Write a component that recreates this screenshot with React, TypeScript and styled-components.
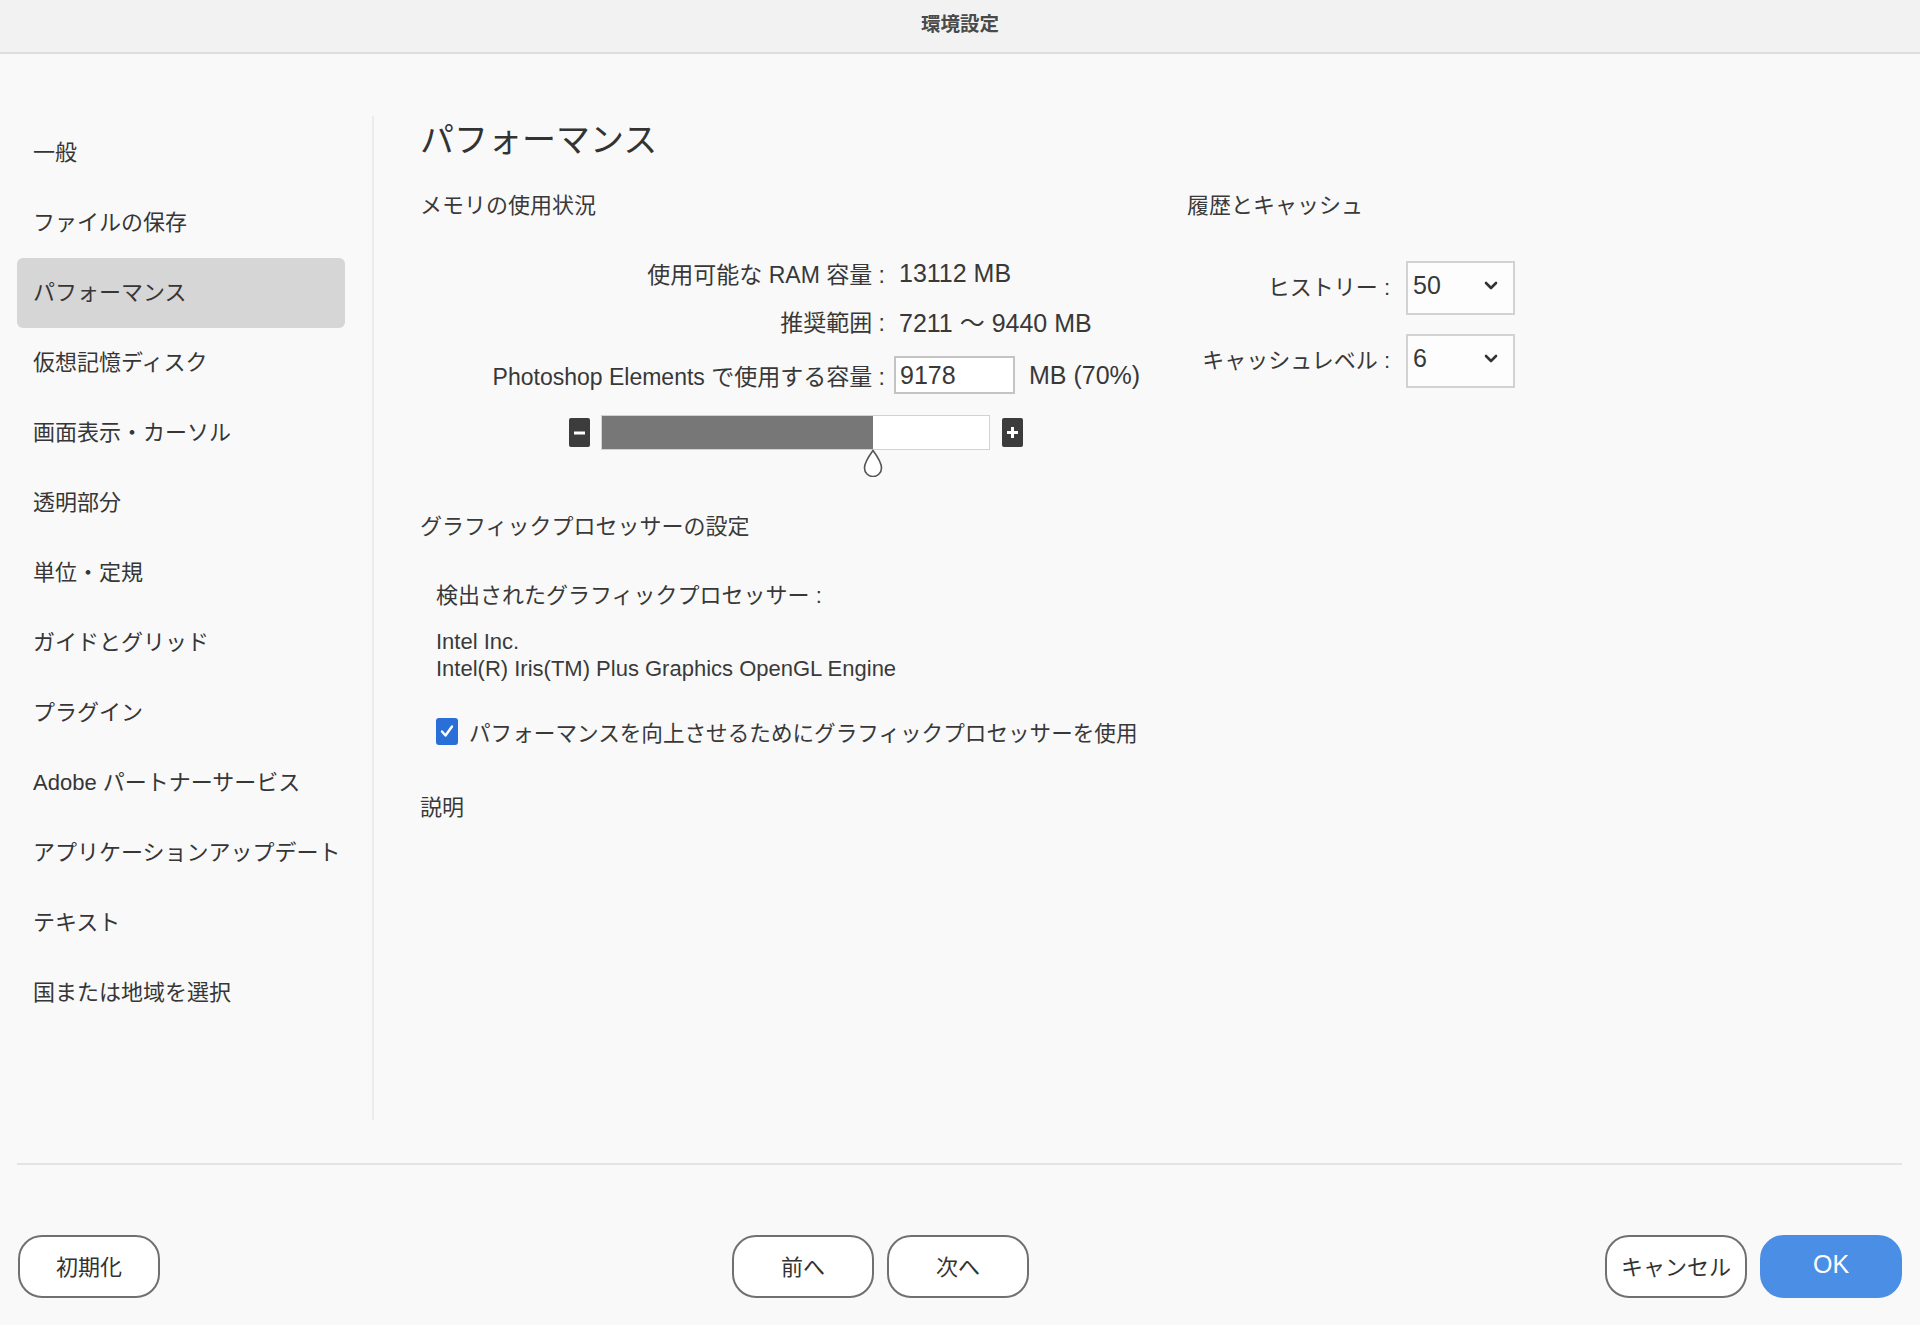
import React from 'react';
import styled, { createGlobalStyle } from 'styled-components';

const GlobalStyle = createGlobalStyle`
  html, body {
    margin: 0;
    padding: 0;
  }
  body {
    background: #f9f9f9;
    font-family: "Liberation Sans", "Noto Sans CJK JP", sans-serif;
    color: #383838;
  }
  * {
    box-sizing: border-box;
  }
`;

const Window = styled.div`
  width: 1920px;
  height: 1325px;
  display: flex;
  flex-direction: column;
  background: #f9f9f9;
  overflow: hidden;
`;

const TitleBar = styled.div`
  height: 54px;
  flex-shrink: 0;
  display: flex;
  align-items: center;
  justify-content: center;
  padding-bottom: 7px;
  background: #f2f2f2;
  border-bottom: 2px solid #dedede;
  font-size: 19.5px;
  font-weight: 700;
  color: #4a4a4a;
`;

const Main = styled.div`
  height: 1109px;
  flex-shrink: 0;
  display: flex;
`;

const Sidebar = styled.nav`
  width: 374px;
  height: 1004px;
  margin-top: 62px;
  padding: 2px 0 0 17px;
  border-right: 2px solid #ececec;
  display: flex;
  flex-direction: column;
`;

const NavItem = styled.div<{ $active?: boolean }>`
  width: 328px;
  height: 70px;
  padding: 0 0 6px 16px;
  display: flex;
  align-items: center;
  font-size: 22px;
  color: #363636;
  border-radius: 6px;
  background: ${(p) => (p.$active ? '#d6d6d6' : 'transparent')};
`;

const Content = styled.section`
  flex: 1;
  padding: 62px 0 0 46px;
`;

const PageTitle = styled.h1`
  margin: 0;
  font-size: 34px;
  line-height: 48px;
  font-weight: 400;
  color: #333;
`;

const Columns = styled.div`
  display: flex;
`;

const LeftCol = styled.div`
  width: 767px;
  display: flex;
  flex-direction: column;
`;

const RightCol = styled.div`
  display: flex;
  flex-direction: column;
`;

const SectionHeading = styled.div<{ $gap: number }>`
  margin-top: ${(p) => p.$gap}px;
  font-size: 22px;
  line-height: 36px;
  color: #3a3a3a;
`;

const MemGrid = styled.div`
  margin-top: 31px;
  display: grid;
  grid-template-columns: 465px auto;
  grid-template-rows: 36px 36px 48px;
  column-gap: 9px;
  row-gap: 12px;
  align-items: center;
`;

const MemLabel = styled.div`
  text-align: right;
  white-space: nowrap;
  font-size: 23px;
`;

const MemValue = styled.div`
  display: flex;
  align-items: center;
  gap: 14px;
  padding-left: 5px;
  font-size: 25px;
  white-space: nowrap;
`;

const NumberBox = styled.div`
  width: 121px;
  height: 38px;
  margin-left: -5px;
  padding-left: 4px;
  display: flex;
  align-items: center;
  border: 2px solid #c4c4c4;
  background: #fff;
  font-size: 25px;
`;

const SliderRow = styled.div`
  margin-top: 16px;
  padding-left: 149px;
  height: 35px;
  display: flex;
  align-items: center;
`;

const StepButton = styled.div`
  width: 21px;
  height: 29px;
  border-radius: 2px;
  background: #3c3c3c;
  display: flex;
  align-items: center;
  justify-content: center;
`;

const Track = styled.div`
  position: relative;
  width: 389px;
  height: 35px;
  margin: 0 12px 0 11px;
  border: 1.5px solid #d2d2d2;
  background: #fff;
`;

const TrackFill = styled.div`
  height: 100%;
  background: #777;
`;

const Thumb = styled.div`
  position: absolute;
  top: 100%;
  transform: translateX(-50%);
  width: 20px;
  height: 28px;
`;

const Indented = styled.div`
  padding-left: 16px;
  display: flex;
  flex-direction: column;
`;

const Line = styled.div<{ $gap: number }>`
  margin-top: ${(p) => p.$gap}px;
  font-size: 22px;
  line-height: 36px;
`;

const GpuInfo = styled.div`
  margin-top: 14px;
  font-size: 22px;
  line-height: 27px;
  color: #3a3a3a;
`;

const CheckRow = styled.label`
  margin-top: 31px;
  height: 36px;
  display: flex;
  align-items: center;
  gap: 11px;
  font-size: 21.6px;
`;

const CheckBox = styled.span`
  width: 22px;
  height: 27px;
  border-radius: 3px;
  background: #2a6ed8;
  display: flex;
  align-items: center;
  justify-content: center;
`;

const Description = styled(SectionHeading)`
  margin-top: 41px;
`;

const SettingsGrid = styled.div`
  margin-top: 37px;
  display: grid;
  grid-template-columns: 203px 109px;
  grid-auto-rows: 54px;
  column-gap: 16px;
  row-gap: 19px;
  align-items: center;
`;

const SettingLabel = styled.div`
  text-align: right;
  white-space: nowrap;
  font-size: 22px;
  padding-bottom: 6px;
`;

const Select = styled.div`
  width: 109px;
  height: 54px;
  padding: 0 15px 6px 5px;
  display: flex;
  align-items: center;
  justify-content: space-between;
  border: 2px solid #d2d2d2;
  background: #fdfdfd;
  font-size: 25px;
`;

const Divider = styled.div`
  height: 2px;
  margin: 0 18px 0 17px;
  background: #e4e4e4;
`;

const Footer = styled.footer`
  padding: 70px 18px 0 18px;
  display: flex;
  align-items: center;
`;

const Group = styled.div<{ $push?: boolean; $offset?: number }>`
  display: flex;
  gap: 13px;
  margin-left: ${(p) => (p.$push ? 'auto' : `${p.$offset ?? 0}px`)};
`;

const PillButton = styled.button<{ $primary?: boolean }>`
  width: 142px;
  height: 63px;
  padding: 0 0 4px;
  border-radius: 24px;
  border: 2px solid ${(p) => (p.$primary ? '#4a8fe5' : '#707070')};
  background: ${(p) => (p.$primary ? '#4a8fe5' : '#fff')};
  color: ${(p) => (p.$primary ? '#fff' : '#333')};
  font-family: inherit;
  font-size: ${(p) => (p.$primary ? '25px' : '22px')};
  cursor: pointer;
`;

const Chevron = () => (
  <svg width="14" height="9" viewBox="0 0 14 9">
    <path d="M2 2 L7 7 L12 2" fill="none" stroke="#333" strokeWidth="2.6" strokeLinecap="round" strokeLinejoin="round" />
  </svg>
);

const navItems = [
  '一般',
  'ファイルの保存',
  'パフォーマンス',
  '仮想記憶ディスク',
  '画面表示・カーソル',
  '透明部分',
  '単位・定規',
  'ガイドとグリッド',
  'プラグイン',
  'Adobe パートナーサービス',
  'アプリケーションアップデート',
  'テキスト',
  '国または地域を選択',
];

const usage = 70;

export default function App() {
  return (
    <Window>
      <GlobalStyle />
      <TitleBar>環境設定</TitleBar>
      <Main>
        <Sidebar>
          {navItems.map((item) => (
            <NavItem key={item} $active={item === 'パフォーマンス'}>
              {item}
            </NavItem>
          ))}
        </Sidebar>
        <Content>
          <PageTitle>パフォーマンス</PageTitle>
          <Columns>
            <LeftCol>
              <SectionHeading $gap={24}>メモリの使用状況</SectionHeading>
              <MemGrid>
                <MemLabel>使用可能な RAM 容量 :</MemLabel>
                <MemValue>13112 MB</MemValue>
                <MemLabel>推奨範囲 :</MemLabel>
                <MemValue>7211 ～ 9440 MB</MemValue>
                <MemLabel>Photoshop Elements で使用する容量 :</MemLabel>
                <MemValue>
                  <NumberBox>9178</NumberBox>
                  MB (70%)
                </MemValue>
              </MemGrid>
              <SliderRow>
                <StepButton>
                  <svg width="11" height="4" viewBox="0 0 11 4">
                    <rect x="0" y="0.5" width="11" height="3" fill="#fff" />
                  </svg>
                </StepButton>
                <Track>
                  <TrackFill style={{ width: `${usage}%` }} />
                  <Thumb style={{ left: `${usage}%` }}>
                    <svg width="20" height="28" viewBox="0 0 20 28">
                      <path
                        d="M10 1.5 C10 1.5 18.5 13 18.5 19 A8.5 8.5 0 0 1 1.5 19 C1.5 13 10 1.5 10 1.5 Z"
                        fill="#fff"
                        stroke="#555"
                        strokeWidth="1.6"
                      />
                    </svg>
                  </Thumb>
                </Track>
                <StepButton>
                  <svg width="11" height="11" viewBox="0 0 11 11">
                    <rect x="0" y="4" width="11" height="3" fill="#fff" />
                    <rect x="4" y="0" width="3" height="11" fill="#fff" />
                  </svg>
                </StepButton>
              </SliderRow>
              <SectionHeading $gap={59}>グラフィックプロセッサーの設定</SectionHeading>
              <Indented>
                <Line $gap={33}>検出されたグラフィックプロセッサー :</Line>
                <GpuInfo>
                  Intel Inc.
                  <br />
                  Intel(R) Iris(TM) Plus Graphics OpenGL Engine
                </GpuInfo>
                <CheckRow>
                  <CheckBox>
                    <svg width="16" height="16" viewBox="0 0 16 16">
                      <path d="M3 8.5 L6.5 12.5 L13 3.5" fill="none" stroke="#fff" strokeWidth="2.4" strokeLinecap="round" strokeLinejoin="round" />
                    </svg>
                  </CheckBox>
                  パフォーマンスを向上させるためにグラフィックプロセッサーを使用
                </CheckRow>
              </Indented>
              <Description $gap={41}>説明</Description>
            </LeftCol>
            <RightCol>
              <SectionHeading $gap={24}>履歴とキャッシュ</SectionHeading>
              <SettingsGrid>
                <SettingLabel>ヒストリー :</SettingLabel>
                <Select>
                  <span>50</span>
                  <Chevron />
                </Select>
                <SettingLabel>キャッシュレベル :</SettingLabel>
                <Select>
                  <span>6</span>
                  <Chevron />
                </Select>
              </SettingsGrid>
            </RightCol>
          </Columns>
        </Content>
      </Main>
      <Divider />
      <Footer>
        <PillButton>初期化</PillButton>
        <Group $offset={572}>
          <PillButton>前へ</PillButton>
          <PillButton>次へ</PillButton>
        </Group>
        <Group $push>
          <PillButton>キャンセル</PillButton>
          <PillButton $primary>OK</PillButton>
        </Group>
      </Footer>
    </Window>
  );
}
